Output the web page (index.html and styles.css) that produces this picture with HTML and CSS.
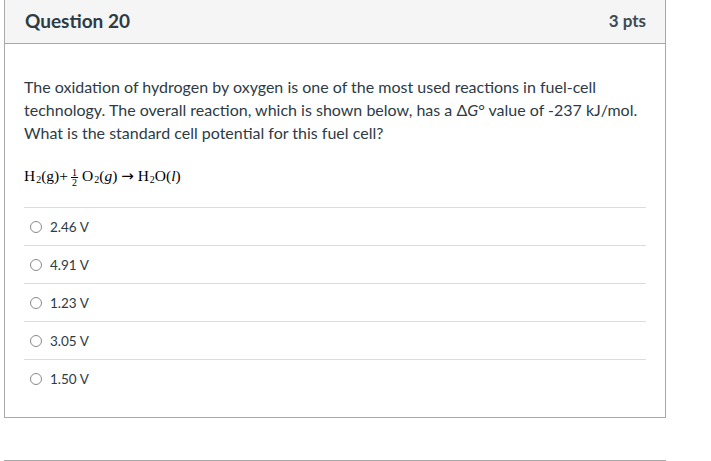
FILE: index.html
```html
<!DOCTYPE html>
<html>
<head>
<meta charset="utf-8">
<link rel="stylesheet" href="styles.css">
</head>
<body>
<div class="card">
  <div class="header">
    <span class="title">Question 20</span>
    <span class="pts">3 pts</span>
  </div>
  <div class="content">
    <p class="question">The oxidation of hydrogen by oxygen is one of the most used reactions in fuel-cell technology. The overall reaction, which is shown below, has a &Delta;<i>G</i>&deg; value of -237 kJ/mol. What is the standard cell potential for this fuel cell?</p>
    <p class="eq">H<sub>2</sub>(g)+<span class="frac"><span class="num">1</span><span class="den">2</span></span>O<sub>2</sub>(<i>g</i>) <span class="arrow">&rarr;</span> H<sub>2</sub>O(<i>l</i>)</p>
    <div class="answers">
      <label class="answer"><span class="radio"></span><span class="atext">2.46 V</span></label>
      <label class="answer"><span class="radio"></span><span class="atext">4.91 V</span></label>
      <label class="answer"><span class="radio"></span><span class="atext">1.23 V</span></label>
      <label class="answer"><span class="radio"></span><span class="atext">3.05 V</span></label>
      <label class="answer"><span class="radio"></span><span class="atext">1.50 V</span></label>
    </div>
  </div>
</div>
<div class="bottom-line"></div>
</body>
</html>
```
FILE: styles.css
```css
html, body {
  margin: 0;
  padding: 0;
  background: #fff;
}
body {
  font-family: Lato, "Liberation Sans", sans-serif;
  color: #2d3b45;
  padding-left: 4px;
  width: 662px;
}
.card {
  border: 1px solid #a8a8a8;
  border-top: none;
  width: 660px;
}
.header {
  height: 44px;
  box-sizing: border-box;
  background: #f5f5f5;
  border-bottom: 1px solid #a8a8a8;
  display: flex;
  align-items: center;
  justify-content: space-between;
  padding: 0 19px 2px 20px;
}
.title {
  font-weight: bold;
  font-size: 19px;
}
.pts {
  font-weight: bold;
  font-size: 17px;
  color: #3d4a54;
}
.content {
  padding: 31px 19px 20px 19px;
}
.question {
  margin: 0;
  font-size: 16px;
  line-height: 23px;
}
.eq {
  margin: 22px 0 0 0;
  font-family: "Liberation Serif", "DejaVu Serif", serif;
  font-size: 15.5px;
  line-height: 20px;
  height: 29px;
  color: #000;
}
.eq sub {
  font-size: 10px;
  vertical-align: -2px;
  margin-left: 1px;
}
.frac {
  display: inline-flex;
  flex-direction: column;
  align-items: center;
  vertical-align: middle;
  font-size: 10px;
  line-height: 9px;
  margin: 0 4px 0 3px;
}
.num {
  border-bottom: 1px solid #000;
  padding: 0 1px;
}
.arrow {
  font-family: "DejaVu Sans", sans-serif;
  font-size: 15px;
}
.answers {
  margin-top: 12px;
}
.answer {
  display: flex;
  align-items: center;
  height: 37px;
  border-top: 1px solid #dcdcdc;
  font-size: 13.5px;
}
.radio {
  width: 12px;
  height: 12px;
  border: 1px solid #8a8a8a;
  border-radius: 50%;
  margin-left: 6px;
  margin-right: 8px;
  box-sizing: border-box;
  flex: none;
}
.bottom-line {
  margin-top: 42px;
  height: 1px;
  background: #a8a8a8;
  width: 662px;
}
```
